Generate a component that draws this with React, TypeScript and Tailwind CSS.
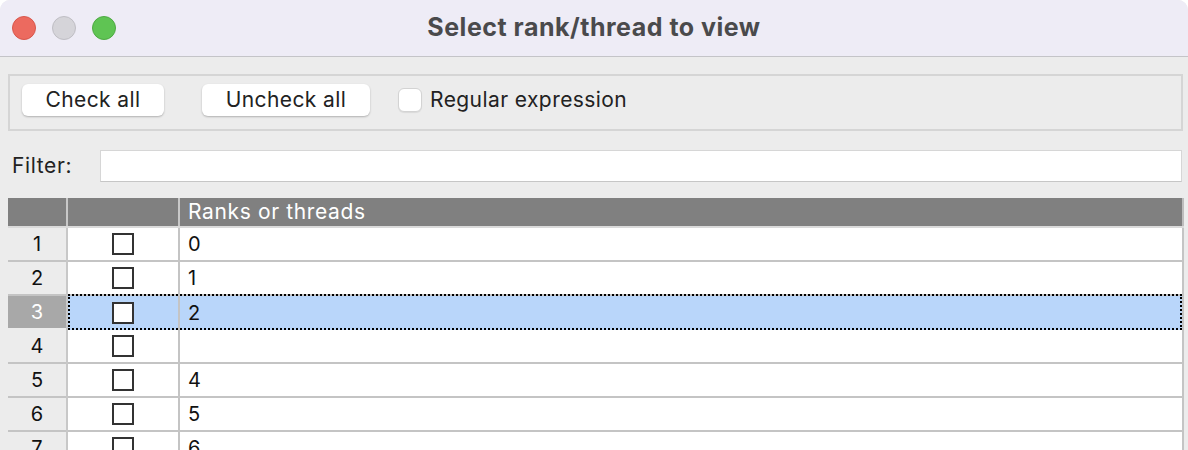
import React from "react";

const rows = [
  { n: 1, v: "0" },
  { n: 2, v: "1" },
  { n: 3, v: "2", selected: true },
  { n: 4, v: "" },
  { n: 5, v: "4" },
  { n: 6, v: "5" },
  { n: 7, v: "6" },
  { n: 8, v: "7" },
];

const App: React.FC = () => {
  return (
    <div className="h-[450px] overflow-hidden bg-white font-['Inter','Liberation_Sans',sans-serif] text-[21px] text-[#222]">
      <div className="h-full rounded-t-[10px] overflow-hidden bg-[#ececec]">
        {/* title bar */}
        <div className="relative h-[57px] bg-[#eeecf6] border-b border-[#c4c4c8] flex items-center justify-center">
          <div className="absolute left-[12px] top-[16px] flex gap-4">
            <span className="w-6 h-6 rounded-full bg-[#ec6a5f] border border-[#d8574c]" />
            <span className="w-6 h-6 rounded-full bg-[#d5d4d9] border border-[#bfbec4]" />
            <span className="w-6 h-6 rounded-full bg-[#5fc453] border border-[#4eaa43]" />
          </div>
          <h1 className="text-[25px] font-bold text-[#4a4a4c] tracking-[0.02em]">
            Select rank/thread to view
          </h1>
        </div>

        <div className="pt-[17px]">
          {/* button group */}
          <div className="ml-2 mr-[5px] h-[57px] border-2 border-[#d5d5d5] pl-3 pt-2">
            <div className="flex items-center h-8">
              <button className="w-[142px] h-8 bg-white rounded-md shadow-[0_1px_2px_rgba(0,0,0,0.25)] tracking-[0.02em]">
                Check all
              </button>
              <button className="ml-[38px] w-[168px] h-8 bg-white rounded-md shadow-[0_1px_2px_rgba(0,0,0,0.25)] tracking-[0.02em]">
                Uncheck all
              </button>
              <span className="ml-[28px] w-6 h-6 rounded-md bg-white border border-[#d3d3d3] shadow-[0_1px_1px_rgba(0,0,0,0.08)]" />
              <span className="ml-2 tracking-[0.02em]">Regular expression</span>
            </div>
          </div>

          {/* filter */}
          <div className="mt-[19px] flex items-center pl-3 mr-[6px]">
            <span className="w-[88px] tracking-[0.03em]">Filter:</span>
            <input className="flex-1 h-8 bg-white border border-[#d6d6d6] border-b-[#c6c6c6] outline-none" />
          </div>

          {/* table */}
          <div className="mt-4 ml-2 mr-1 text-[20px]">
            <div className="flex h-[30px] border-b-2 border-[#dadada]">
              <div className="w-[58px] bg-[#808080]" />
              <div className="w-[2px] bg-[#c8c8c8]" />
              <div className="w-[110px] bg-[#808080]" />
              <div className="w-[2px] bg-[#c8c8c8]" />
              <div className="flex-1 bg-[#808080] text-white pl-2 flex items-center text-[21px] tracking-[0.03em]">
                Ranks or threads
              </div>
              <div className="w-[2px] bg-[#bdbdbd]" />
            </div>
            {rows.map((r) => (
              <div key={r.n} className="flex h-[34px]">
                <div
                  className={
                    r.selected
                      ? "w-[58px] bg-[#a8a8a8] text-white flex items-center justify-center border-b-2 border-[#ececec]"
                      : "w-[58px] bg-[#ececec] text-[#111] flex items-center justify-center border-b-2 border-[#c4c4c4]"
                  }
                >
                  {r.n}
                </div>
                <div className="w-[2px] bg-[#c8c8c8]" />
                <div className="relative flex-1 flex">
                  <div
                    className={
                      r.selected
                        ? "w-[110px] bg-[#b9d6fa] flex items-center justify-center"
                        : "w-[110px] bg-white flex items-center justify-center border-b-2 border-[#c4c4c4]"
                    }
                  >
                    <span className="w-[22px] h-[22px] border-2 border-[#333] bg-white" />
                  </div>
                  <div className="w-[2px] bg-[#c4c4c4]" />
                  <div
                    className={
                      r.selected
                        ? "flex-1 bg-[#b9d6fa] pl-2 flex items-center text-[#111]"
                        : "flex-1 bg-white pl-2 flex items-center text-[#111] border-b-2 border-[#c4c4c4]"
                    }
                  >
                    {r.v}
                  </div>
                  {r.selected && (
                    <div className="absolute left-0 right-0 top-[-2px] bottom-0 border-2 border-dotted border-black pointer-events-none" />
                  )}
                </div>
                <div className="w-[2px] bg-[#c4c4c4]" />
              </div>
            ))}
          </div>
        </div>
      </div>
    </div>
  );
};

export default App;
